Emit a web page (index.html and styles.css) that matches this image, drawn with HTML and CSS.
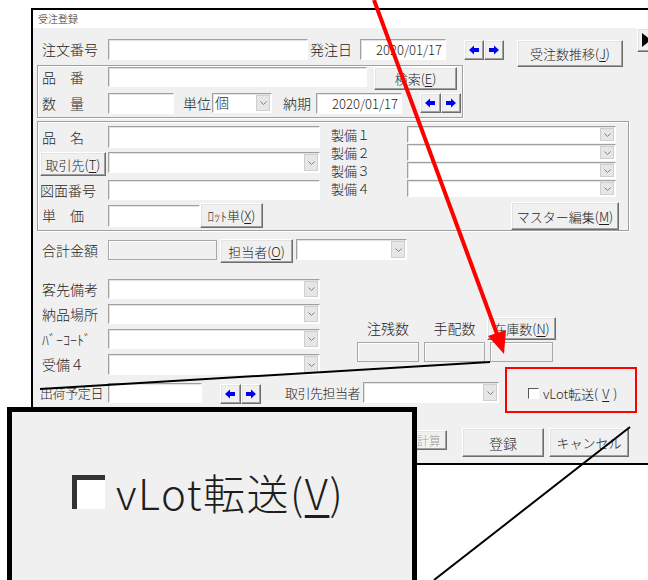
FILE: index.html
```html
<!DOCTYPE html>
<html lang="ja">
<head>
    <meta charset="UTF-8">
    <title>受注登録</title>
    <link rel="stylesheet" href="styles.css">
</head>
<body>

<div class="window">
    <div class="titlebar">受注登録</div>
    <div class="dialog">

        <div class="row r-order">
            <span class="lbl l-order">注文番号</span>
            <span class="field f-order"></span>
            <span class="lbl l-odate">発注日</span>
            <span class="field date d-odate">2020/01/17</span>
            <span class="spin s-odate">
                <span class="btn"><svg class="arrow" viewBox="0 0 10 10"><polygon points="0,5 5,0.5 5,3 10,3 10,7 5,7 5,9.5"/></svg></span>
                <span class="btn"><svg class="arrow" viewBox="0 0 10 10"><polygon points="10,5 5,0.5 5,3 0,3 0,7 5,7 5,9.5"/></svg></span>
            </span>
            <span class="btn b-trend">受注数推移(<u>J</u>)</span>
            <span class="btn b-more"><svg width="9" height="14" viewBox="0 0 9 14"><polygon points="0,0 9,7 0,14" fill="#000"/></svg></span>
        </div>

        <div class="group g-item">
            <div class="row r-part">
                <span class="lbl l-std l-part">品　番</span>
                <span class="field f-part"></span>
                <span class="btn b-search">検索(<u>E</u>)</span>
            </div>
            <div class="row r-qty">
                <span class="lbl l-std l-qty">数　量</span>
                <span class="field f-qty"></span>
                <span class="lbl l-unit">単位</span>
                <span class="combo c-unit"><span class="val">個</span><span class="drop"><svg viewBox="0 0 7 4"><polyline points="0.5,0.5 3.5,3.5 6.5,0.5"/></svg></span></span>
                <span class="lbl l-due">納期</span>
                <span class="field date d-due">2020/01/17</span>
                <span class="spin s-due">
                    <span class="btn"><svg class="arrow" viewBox="0 0 10 10"><polygon points="0,5 5,0.5 5,3 10,3 10,7 5,7 5,9.5"/></svg></span>
                    <span class="btn"><svg class="arrow" viewBox="0 0 10 10"><polygon points="10,5 5,0.5 5,3 0,3 0,7 5,7 5,9.5"/></svg></span>
                </span>
            </div>
        </div>

        <div class="group g-spec">
            <div class="g-left">
                <div class="row r-name">
                    <span class="lbl l-std l-name">品　名</span>
                    <span class="field f-wide f-name"></span>
                </div>
                <div class="row r-client">
                    <span class="btn b-client">取引先(<u>T</u>)</span>
                    <span class="combo c-client"><span class="val"></span><span class="drop"><svg viewBox="0 0 7 4"><polyline points="0.5,0.5 3.5,3.5 6.5,0.5"/></svg></span></span>
                </div>
                <div class="row r-drawing">
                    <span class="lbl l-drawing">図面番号</span>
                    <span class="field f-wide f-drawing"></span>
                </div>
                <div class="row r-price">
                    <span class="lbl l-std l-price">単　価</span>
                    <span class="field f-price"></span>
                    <span class="btn b-lot">ﾛｯﾄ単(<u>X</u>)</span>
                </div>
            </div>
            <div class="g-right">
                <div class="row r-make">
                    <span class="lbl l-make">製備１</span>
                    <span class="combo c-make"><span class="val"></span><span class="drop"><svg viewBox="0 0 7 4"><polyline points="0.5,0.5 3.5,3.5 6.5,0.5"/></svg></span></span>
                </div>
                <div class="row r-make">
                    <span class="lbl l-make">製備２</span>
                    <span class="combo c-make"><span class="val"></span><span class="drop"><svg viewBox="0 0 7 4"><polyline points="0.5,0.5 3.5,3.5 6.5,0.5"/></svg></span></span>
                </div>
                <div class="row r-make">
                    <span class="lbl l-make">製備３</span>
                    <span class="combo c-make"><span class="val"></span><span class="drop"><svg viewBox="0 0 7 4"><polyline points="0.5,0.5 3.5,3.5 6.5,0.5"/></svg></span></span>
                </div>
                <div class="row r-make">
                    <span class="lbl l-make">製備４</span>
                    <span class="combo c-make"><span class="val"></span><span class="drop"><svg viewBox="0 0 7 4"><polyline points="0.5,0.5 3.5,3.5 6.5,0.5"/></svg></span></span>
                </div>
                <span class="btn b-master">マスター編集(<u>M</u>)</span>
            </div>
        </div>

        <div class="row r-total">
            <span class="lbl l-total">合計金額</span>
            <span class="field off f-total"></span>
            <span class="btn b-staff">担当者(<u>O</u>)</span>
            <span class="combo c-staff"><span class="val"></span><span class="drop"><svg viewBox="0 0 7 4"><polyline points="0.5,0.5 3.5,3.5 6.5,0.5"/></svg></span></span>
        </div>

        <div class="mid">
            <div class="mid-left">
                <div class="row r-note">
                    <span class="lbl l-note">客先備考</span>
                    <span class="combo c-note"><span class="val"></span><span class="drop"><svg viewBox="0 0 7 4"><polyline points="0.5,0.5 3.5,3.5 6.5,0.5"/></svg></span></span>
                </div>
                <div class="row r-note">
                    <span class="lbl l-note">納品場所</span>
                    <span class="combo c-note"><span class="val"></span><span class="drop"><svg viewBox="0 0 7 4"><polyline points="0.5,0.5 3.5,3.5 6.5,0.5"/></svg></span></span>
                </div>
                <div class="row r-note">
                    <span class="lbl l-note">ﾊﾞｰｺｰﾄﾞ</span>
                    <span class="combo c-note"><span class="val"></span><span class="drop"><svg viewBox="0 0 7 4"><polyline points="0.5,0.5 3.5,3.5 6.5,0.5"/></svg></span></span>
                </div>
                <div class="row r-note r-last">
                    <span class="lbl l-note">受備４</span>
                    <span class="combo c-note"><span class="val"></span><span class="drop"><svg viewBox="0 0 7 4"><polyline points="0.5,0.5 3.5,3.5 6.5,0.5"/></svg></span></span>
                </div>
            </div>
            <div class="mid-right">
                <span class="lbl stock-lbl">注残数</span>
                <span class="lbl stock-lbl">手配数</span>
                <span class="btn b-stock">在庫数(<u>N</u>)</span>
                <span class="field off"></span>
                <span class="field off"></span>
                <span class="field off"></span>
            </div>
        </div>

        <div class="row r-ship">
            <span class="lbl l-ship">出荷予定日</span>
            <span class="field f-ship"></span>
            <span class="spin s-ship">
                <span class="btn"><svg class="arrow" viewBox="0 0 10 10"><polygon points="0,5 5,0.5 5,3 10,3 10,7 5,7 5,9.5"/></svg></span>
                <span class="btn"><svg class="arrow" viewBox="0 0 10 10"><polygon points="10,5 5,0.5 5,3 0,3 0,7 5,7 5,9.5"/></svg></span>
            </span>
            <span class="lbl l-contact">取引先担当者</span>
            <span class="combo c-contact"><span class="val"></span><span class="drop"><svg viewBox="0 0 7 4"><polyline points="0.5,0.5 3.5,3.5 6.5,0.5"/></svg></span></span>
            <span class="check"><span class="box"></span>vLot転送(<u>V</u>)</span>
        </div>

        <div class="row r-actions">
            <span class="btn b-recalc">再計算</span>
            <span class="btn b-save">登録</span>
            <span class="btn b-cancel">キャンセル</span>
        </div>

    </div>
</div>

<div class="inset">
    <div class="inset-check"><span class="big-box"></span><span class="big-text">vLot転送(<u>V</u>)</span></div>
</div>

<div class="red-box"></div>

<svg class="anno" width="648" height="580" viewBox="0 0 648 580">
    <line x1="374" y1="0" x2="497" y2="334" stroke="#f00" stroke-width="4"/>
    <polygon points="504,354 488,336 506,330" fill="#f00"/>
    <line x1="40" y1="389" x2="490" y2="362" stroke="#000" stroke-width="2"/>
    <line x1="630" y1="427" x2="434" y2="580" stroke="#000" stroke-width="2"/>
</svg>

</body>
</html>
```

FILE: styles.css
```css
*
{
    box-sizing: border-box;
}

html
{
    font-family: "Noto Sans CJK JP", sans-serif;
    font-weight: 300;
    color: #1e1e1e;
}

body
{
    position: relative;
    margin: 0;
    width: 648px;
    height: 580px;
    overflow: hidden;
    background: #fff;
}

u
{
    text-decoration-thickness: 1px;
    text-underline-offset: 2px;
}

/* window frame */

.window
{
    width: 617px;
    margin: 8px 0 0 31px;
    overflow: hidden;
    border: 2px solid #000;
    border-right: none;
}

.titlebar
{
    height: 18px;
    padding: 3px 0 0 5px;
    font-size: 10px;
    line-height: 12px;
    background: #fff;
}

.dialog
{
    height: 435px;
    padding-top: 10px;
    background: #f0f0f0;
    font-size: 14px;
}

/* controls */

.row
{
    display: flex;
    align-items: flex-start;
}

.row > *
{
    flex: none;
}

.lbl
{
    white-space: nowrap;
}

.field
{
    display: block;
    background: #fff;
    border: 1px solid;
    border-color: #a0a0a0 #fff #fff #a0a0a0;
    box-shadow: inset 1px 1px 0 #e3e3e3;
}

.field.off
{
    background: #f0f0f0;
    border-color: #a8a8a8;
    box-shadow: inset 1px 1px 0 #fff;
}

.date
{
    padding-right: 3px;
    font-size: 13px;
    line-height: 19px;
    text-align: right;
}

.btn
{
    display: flex;
    align-items: center;
    justify-content: center;
    background: #f0f0f0;
    border: 1px solid;
    border-color: #fff #6d6d6d #6d6d6d #fff;
    box-shadow: inset -1px -1px 0 #a0a0a0, inset 1px 1px 0 #e3e3e3;
    font-size: 13px;
    white-space: nowrap;
}

.spin
{
    display: flex;
}

.spin .btn
{
    width: 50%;
}

.arrow
{
    width: 10px;
    height: 10px;
    fill: #0000f0;
}

.combo
{
    display: flex;
    background: #fff;
    border: 1px solid;
    border-color: #a0a0a0 #fff #fff #a0a0a0;
    box-shadow: inset 1px 1px 0 #e3e3e3;
}

.combo .val
{
    flex: 1;
    padding-left: 2px;
    line-height: 17px;
}

.combo .drop
{
    display: flex;
    align-items: center;
    justify-content: center;
    width: 14px;
    margin: 1px;
    background: #e6e6e6;
    border: 1px solid #cfcfcf;
}

.combo .drop svg
{
    width: 7px;
    height: 4px;
    fill: none;
    stroke: #808080;
    stroke-width: 1;
}

.group
{
    border: 1px solid #a0a0a0;
    box-shadow: inset 1px 1px 0 #fff, 1px 1px 0 #fff;
}

.l-std
{
    margin-left: 4px;
    width: 66px;
}

/* order row */

.r-order { height: 27px; }
.l-order { margin: 1px 0 0 9px; width: 66px; line-height: 21px; }
.f-order { width: 200px; height: 21px; margin-top: 1px; }
.l-odate { margin: 1px 0 0 2px; width: 50px; line-height: 21px; }
.d-odate { width: 86px; height: 21px; margin-top: 1px; }
.s-odate { margin: 2px 0 0 18px; width: 40px; height: 20px; }
.b-trend { margin: 2px 0 0 13px; width: 106px; height: 27px; }
.b-more { margin: -10px 0 0 14px; width: 22px; height: 24px; justify-content: flex-start; padding-left: 4px; }

/* item group */

.g-item { margin-left: 4px; width: 426px; height: 53px; }
.r-part { margin-top: 1px; height: 23px; }
.l-part { line-height: 20px; }
.f-part { width: 259px; height: 20px; }
.b-search { margin-left: 7px; width: 83px; height: 23px; }
.r-qty { margin-top: 3px; height: 22px; }
.l-qty { line-height: 21px; }
.f-qty { width: 66px; height: 21px; }
.l-unit { margin-left: 9px; width: 29px; line-height: 21px; }
.c-unit { width: 60px; height: 20px; }
.l-due { margin-left: 11px; width: 33px; line-height: 21px; }
.d-due { width: 86px; height: 21px; }
.s-due { margin-left: 18px; width: 41px; height: 20px; }

/* spec group */

.g-spec { display: flex; margin: 3px 0 0 4px; width: 592px; height: 110px; }
.g-left { width: 282px; }
.f-wide { width: 212px; }
.r-name { margin-top: 4px; height: 22px; }
.l-name { line-height: 22px; }
.f-name { height: 22px; }
.r-client { margin-top: 4px; height: 25px; }
.b-client { margin-left: 2px; width: 66px; height: 24px; }
.c-client { margin-left: 2px; width: 212px; height: 21px; }
.r-drawing { margin-top: 3px; height: 20px; }
.l-drawing { margin-left: 2px; width: 68px; line-height: 20px; }
.f-drawing { height: 20px; }
.r-price { margin-top: 3px; height: 25px; }
.l-price { line-height: 25px; }
.f-price { width: 92px; height: 22px; margin-top: 2px; }
.b-lot { width: 63px; height: 25px; }

.g-right { margin-left: 11px; padding-top: 4px; }
.r-make { height: 18px; }
.l-make { width: 76px; font-size: 13px; line-height: 18px; }
.c-make { width: 209px; height: 17px; }
.c-make .val { line-height: 15px; }
.b-master { margin: 4px 0 0 180px; width: 108px; height: 28px; }

/* totals */

.r-total { margin-top: 8px; height: 24px; }
.l-total { margin: 1px 0 0 9px; width: 66px; line-height: 20px; }
.f-total { width: 109px; height: 20px; margin-top: 1px; }
.b-staff { margin-left: 3px; width: 73px; height: 24px; }
.c-staff { margin-left: 3px; width: 111px; height: 21px; }

.mid { display: flex; margin-top: 16px; }
.mid-left { display: flex; flex-direction: column; gap: 5px; }
.r-note { height: 20px; }
.r-last { height: 21px; }
.l-note { margin-left: 9px; width: 66px; line-height: 20px; }
.c-note { width: 212px; height: 100%; }

.mid-right
{
    display: grid;
    grid-template-columns: 62px 61px 63px;
    grid-template-rows: 23px 20px;
    gap: 2px 5px;
    margin: 38px 0 0 37px;
}

.stock-lbl { text-align: center; line-height: 23px; }
.b-stock { margin: 0 -3px; }

/* shipping row */

.r-ship { margin-top: 8px; height: 21px; }
.l-ship { margin-left: 7px; width: 68px; font-size: 13px; letter-spacing: -0.4px; line-height: 20px; }
.f-ship { width: 94px; height: 20px; }
.s-ship { margin: 1px 0 0 18px; width: 41px; height: 20px; }
.l-contact { margin-left: 24px; width: 78px; font-size: 13px; letter-spacing: -0.5px; line-height: 20px; }
.c-contact { width: 136px; height: 21px; margin-top: -1px; }

.check
{
    display: flex;
    align-items: center;
    gap: 4px;
    margin-left: 29px;
    height: 20px;
    font-size: 13px;
    white-space: nowrap;
}

.box
{
    width: 11px;
    height: 11px;
    background: #fff;
    border: 1px solid;
    border-color: #555 #fff #fff #555;
}

/* buttons */

.r-actions { margin-top: 24px; height: 29px; }
.b-recalc { margin: 2px 0 0 366px; width: 48px; height: 20px; font-size: 12px; color: #a0a0a0; text-shadow: 1px 1px 0 #fff; }
.b-save { margin-left: 15px; width: 82px; height: 29px; font-size: 14px; }
.b-cancel { margin-left: 5px; width: 80px; height: 29px; }

/* annotations */

.inset
{
    position: absolute;
    left: 7px;
    top: 407px;
    width: 410px;
    height: 200px;
    padding: 57px 0 0 60px;
    background: #f0f0f0;
    border: 5px solid #000;
}

.inset-check
{
    display: flex;
    align-items: center;
    gap: 11px;
    height: 46px;
}

.big-box
{
    width: 33px;
    height: 34px;
    background: #fff;
    border-top: 5px solid #333;
    border-left: 5px solid #333;
}

.big-text
{
    font-size: 42px;
    line-height: 46px;
    letter-spacing: 1.5px;
    white-space: nowrap;
}

.big-text u
{
    text-decoration-thickness: 3px;
    text-underline-offset: 5px;
}

.red-box
{
    position: absolute;
    left: 505px;
    top: 367px;
    width: 132px;
    height: 46px;
    border: 2px solid #f00;
}

.anno
{
    position: absolute;
    left: 0;
    top: 0;
}
```
